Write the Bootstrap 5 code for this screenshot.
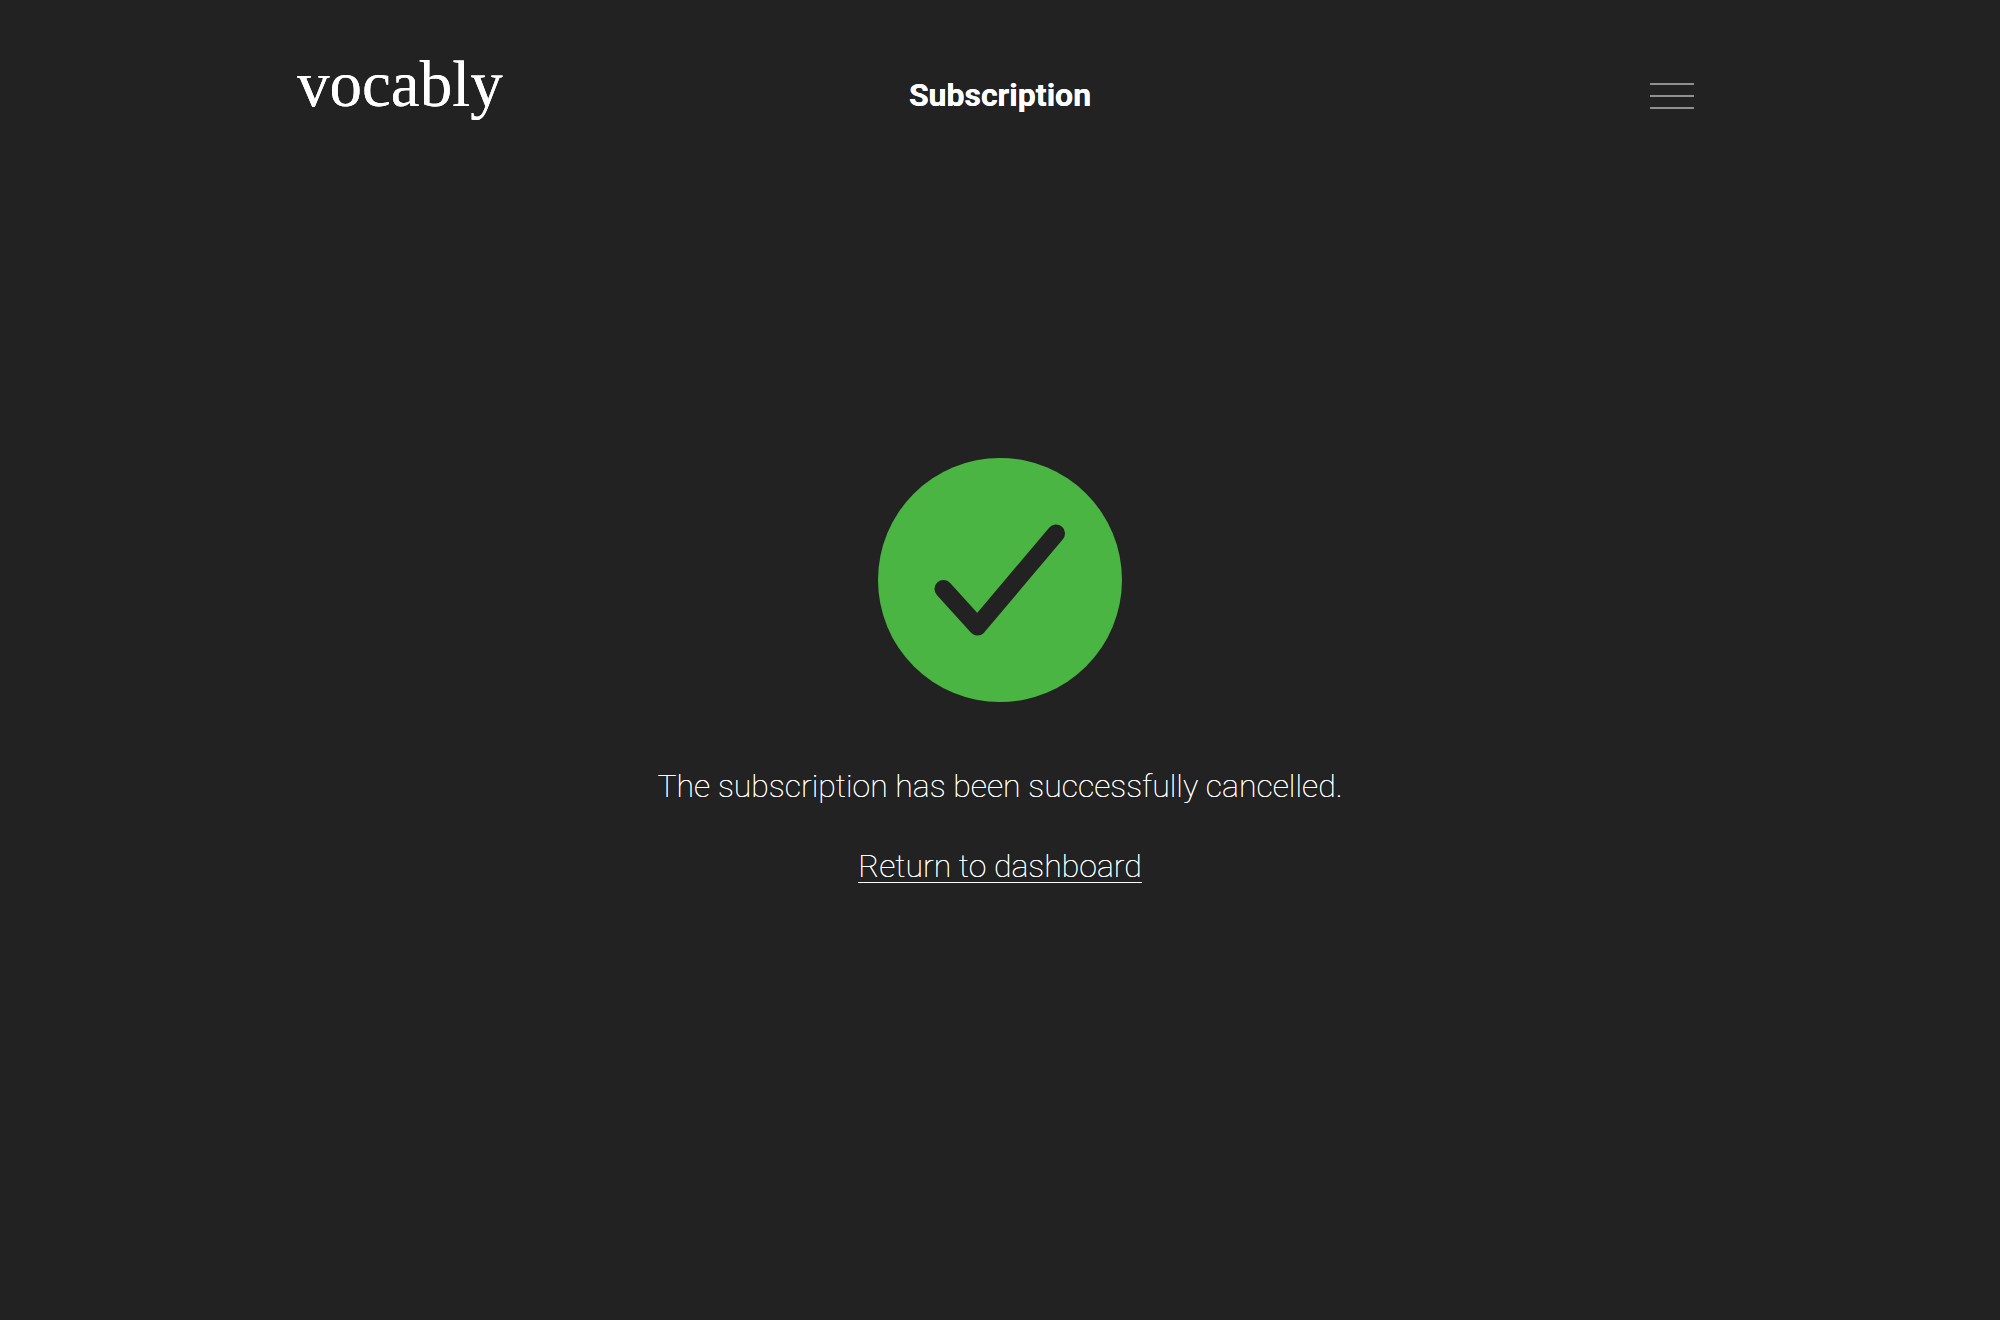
<!DOCTYPE html>
<html lang="en">
<head>
<meta charset="utf-8">
<meta name="viewport" content="width=device-width, initial-scale=1">
<title>Vocably – Subscription</title>
<link rel="stylesheet" href="https://cdn.jsdelivr.net/npm/bootstrap@5.3.0/dist/css/bootstrap.min.css">
<style>
/* The zero-blur shadow strengthens the thin strokes on the dark ground */
body { background: #222; color: #fff; font-family: Roboto, "Liberation Sans", sans-serif; font-size: 32px; line-height: 40px; font-weight: 100; text-shadow: 0 0 0 #fff; }
.page-header { max-width: 1406px; height: 144px; padding-top: 48px; }
.brand { font-family: "Liberation Serif", serif; font-size: 65px; line-height: 72px; font-weight: 400; }
.page-title { font-size: 32px; line-height: 40px; font-weight: 700; padding-top: 27px; }
.menu-btn { padding: 34px 9px 10px; background: none; border: 0; }
.status { padding-bottom: 120px; }
.status-icon { width: 244px; height: 244px; margin-bottom: 64px; }
.dash-link { text-underline-offset: 5px; text-decoration-thickness: 1px; }
.message { margin-bottom: 40px; }
</style>
</head>
<body class="d-flex flex-column min-vh-100">
<header class="page-header container-fluid px-0 w-100 mx-auto">
  <div class="row g-0 align-items-start">
    <div class="col-4"><a class="brand d-block text-white text-decoration-none" href="#">vocably</a></div>
    <div class="col-4 text-center"><h1 class="page-title mb-0">Subscription</h1></div>
    <div class="col-4 d-flex justify-content-end">
      <button class="menu-btn d-flex" type="button" aria-label="Menu">
        <svg width="44" height="28" viewBox="0 0 44 28" fill="#909090" shape-rendering="crispEdges" aria-hidden="true"><path d="M0 1h44v2H0zM0 13h44v2H0zM0 25h44v2H0z"/></svg>
      </button>
    </div>
  </div>
</header>
<main class="status flex-grow-1 d-flex flex-column align-items-center justify-content-center text-center">
  <svg class="status-icon" viewBox="0 0 244 244" aria-hidden="true">
    <circle cx="122" cy="122" r="122" fill="#4bb543"/>
    <path d="M65.5 131 99.5 168.500 178 75.500" fill="none" stroke="#222" stroke-width="18" stroke-linecap="round" stroke-linejoin="round"/>
  </svg>
  <p class="message">The subscription has been successfully cancelled.</p>
  <a class="dash-link text-white" href="#">Return to dashboard</a>
</main>
<script src="https://cdn.jsdelivr.net/npm/bootstrap@5.3.0/dist/js/bootstrap.bundle.min.js"></script>
</body>
</html>
